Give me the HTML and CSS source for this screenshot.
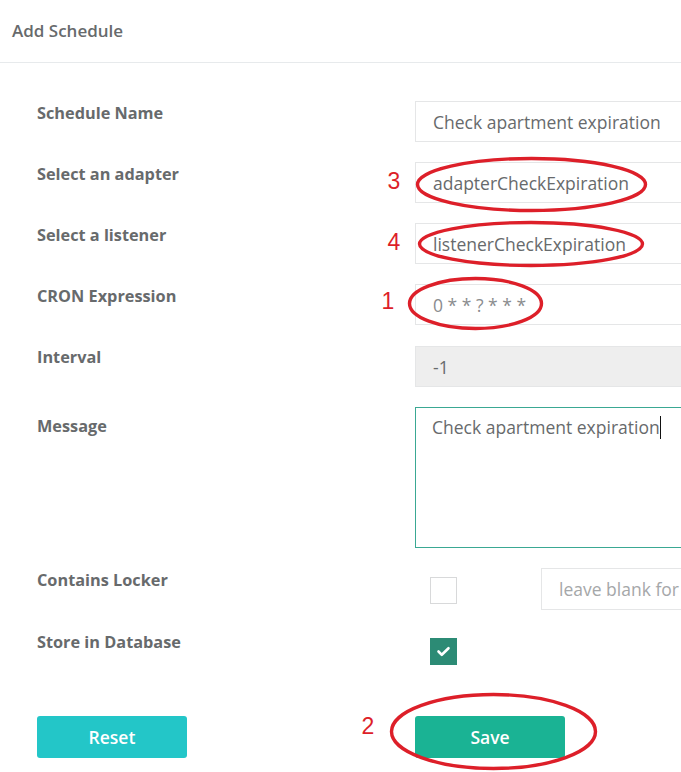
FILE: index.html
```html
<!DOCTYPE html>
<html lang="en">
<head>
<meta charset="utf-8">
<title>Add Schedule</title>
<link rel="stylesheet" href="styles.css">
</head>
<body>
<div class="page">
  <div class="header">Add Schedule</div>
  <div class="form">
    <div class="row">
      <div class="label">Schedule Name</div>
      <div class="ctrl"><div class="field">Check apartment expiration</div></div>
    </div>
    <div class="row">
      <div class="label">Select an adapter</div>
      <div class="ctrl"><div class="field">adapterCheckExpiration</div></div>
    </div>
    <div class="row">
      <div class="label">Select a listener</div>
      <div class="ctrl"><div class="field">listenerCheckExpiration</div></div>
    </div>
    <div class="row">
      <div class="label">CRON Expression</div>
      <div class="ctrl"><div class="field field-light">0 * * ? * * *</div></div>
    </div>
    <div class="row">
      <div class="label">Interval</div>
      <div class="ctrl"><div class="field field-disabled">-1</div></div>
    </div>
    <div class="row">
      <div class="label label-msg">Message</div>
      <div class="ctrl"><div class="textarea">Check apartment expiration<span class="caret"></span></div></div>
    </div>
    <div class="row">
      <div class="label">Contains Locker</div>
      <div class="ctrl ctrl-split">
        <span class="checkbox"></span>
        <div class="field field-placeholder">leave blank for</div>
      </div>
    </div>
    <div class="row">
      <div class="label">Store in Database</div>
      <div class="ctrl ctrl-split">
        <span class="checkbox checked"><svg width="27" height="27" viewBox="0 0 27 27"><path d="M8.5 13.5 L11.8 16.8 L18.5 10.2" fill="none" stroke="#fff" stroke-width="2.6" stroke-linecap="round" stroke-linejoin="round"/></svg></span>
      </div>
    </div>
    <div class="row row-buttons">
      <div class="btn-cell"><button class="btn btn-reset">Reset</button></div>
      <div class="btn-cell"><button class="btn btn-save">Save</button></div>
    </div>
  </div>
  <svg class="annot" width="681" height="772" viewBox="0 0 681 772">
    <g fill="none" stroke="#dd1f29" stroke-width="3.4">
      <ellipse cx="531.5" cy="184.5" rx="114" ry="26"/>
      <ellipse cx="531" cy="244" rx="111.5" ry="21.5"/>
      <ellipse cx="475.5" cy="303.5" rx="66" ry="25"/>
      <ellipse cx="493.5" cy="731.5" rx="102" ry="37"/>
    </g>
    <g class="annot-num" fill="#dd1f29">
      <text x="394" y="189">3</text>
      <text x="394" y="250">4</text>
      <text x="388" y="309">1</text>
      <text x="368" y="734">2</text>
    </g>
  </svg>
</div>
</body>
</html>
```
FILE: styles.css
```css
html, body {
  margin: 0;
  padding: 0;
  background: #ffffff;
}
body {
  font-family: "Open Sans", "Noto Sans", sans-serif;
  color: #676a6c;
  overflow: hidden;
  width: 681px;
  height: 772px;
}
.page {
  position: relative;
  width: 681px;
  height: 772px;
  overflow: hidden;
}
.header {
  height: 63px;
  box-sizing: border-box;
  border-bottom: 1px solid #e7eaec;
  padding-left: 12px;
  padding-bottom: 1px;
  display: flex;
  align-items: center;
  font-size: 17px;
  font-weight: 600;
  color: #676a6c;
}
.form {
  padding: 38px 0 0 37px;
  display: flex;
  flex-direction: column;
  gap: 20px;
}
.row {
  display: grid;
  grid-template-columns: 378px 430px;
}
.label {
  font-size: 16.3px;
  font-weight: 700;
  line-height: 22px;
  padding-top: 1px;
  color: #676a6c;
}
.label-msg {
  padding-top: 8px;
}
.field {
  height: 41px;
  box-sizing: border-box;
  border: 1px solid #e5e6e7;
  padding: 0 17px;
  display: flex;
  align-items: center;
  font-size: 17.5px;
  color: #676a6c;
  white-space: nowrap;
}
.field-light {
  color: #8a8c8e;
}
.field-disabled {
  background: #eeeeee;
  margin-top: 1px;
}
.field-placeholder {
  color: #a5a7a9;
  height: 42px;
}
.textarea {
  height: 141px;
  box-sizing: border-box;
  border: 1px solid #3aa893;
  padding: 7px 16px;
  font-size: 17.5px;
  line-height: 24px;
  color: #676a6c;
  white-space: nowrap;
}
.caret {
  display: inline-block;
  width: 1px;
  height: 23px;
  background: #111;
  vertical-align: -5px;
}
.ctrl-split {
  display: grid;
  grid-template-columns: 126px 1fr;
  align-items: start;
}
.checkbox {
  display: block;
  width: 27px;
  height: 27px;
  box-sizing: border-box;
  margin: 9px 0 0 15px;
  border: 1px solid #d8d9da;
  background: #fff;
}
.checkbox.checked {
  border: none;
  margin-top: 8px;
  background: #2c8b75;
}
.checkbox svg {
  display: block;
}
.row-buttons {
  margin-top: 31px;
}
.btn {
  width: 150px;
  height: 42px;
  border: none;
  border-radius: 3px;
  color: #ffffff;
  font-family: "Open Sans", "Noto Sans", sans-serif;
  font-size: 17.5px;
  font-weight: 600;
  padding: 0;
  cursor: pointer;
}
.btn-reset {
  background: #23c6c8;
}
.btn-save {
  background: #1ab394;
}
.annot {
  position: absolute;
  left: 0;
  top: 0;
  pointer-events: none;
}
.annot-num text {
  font-family: "Liberation Sans", Arial, sans-serif;
  font-size: 23px;
  text-anchor: middle;
}
```
